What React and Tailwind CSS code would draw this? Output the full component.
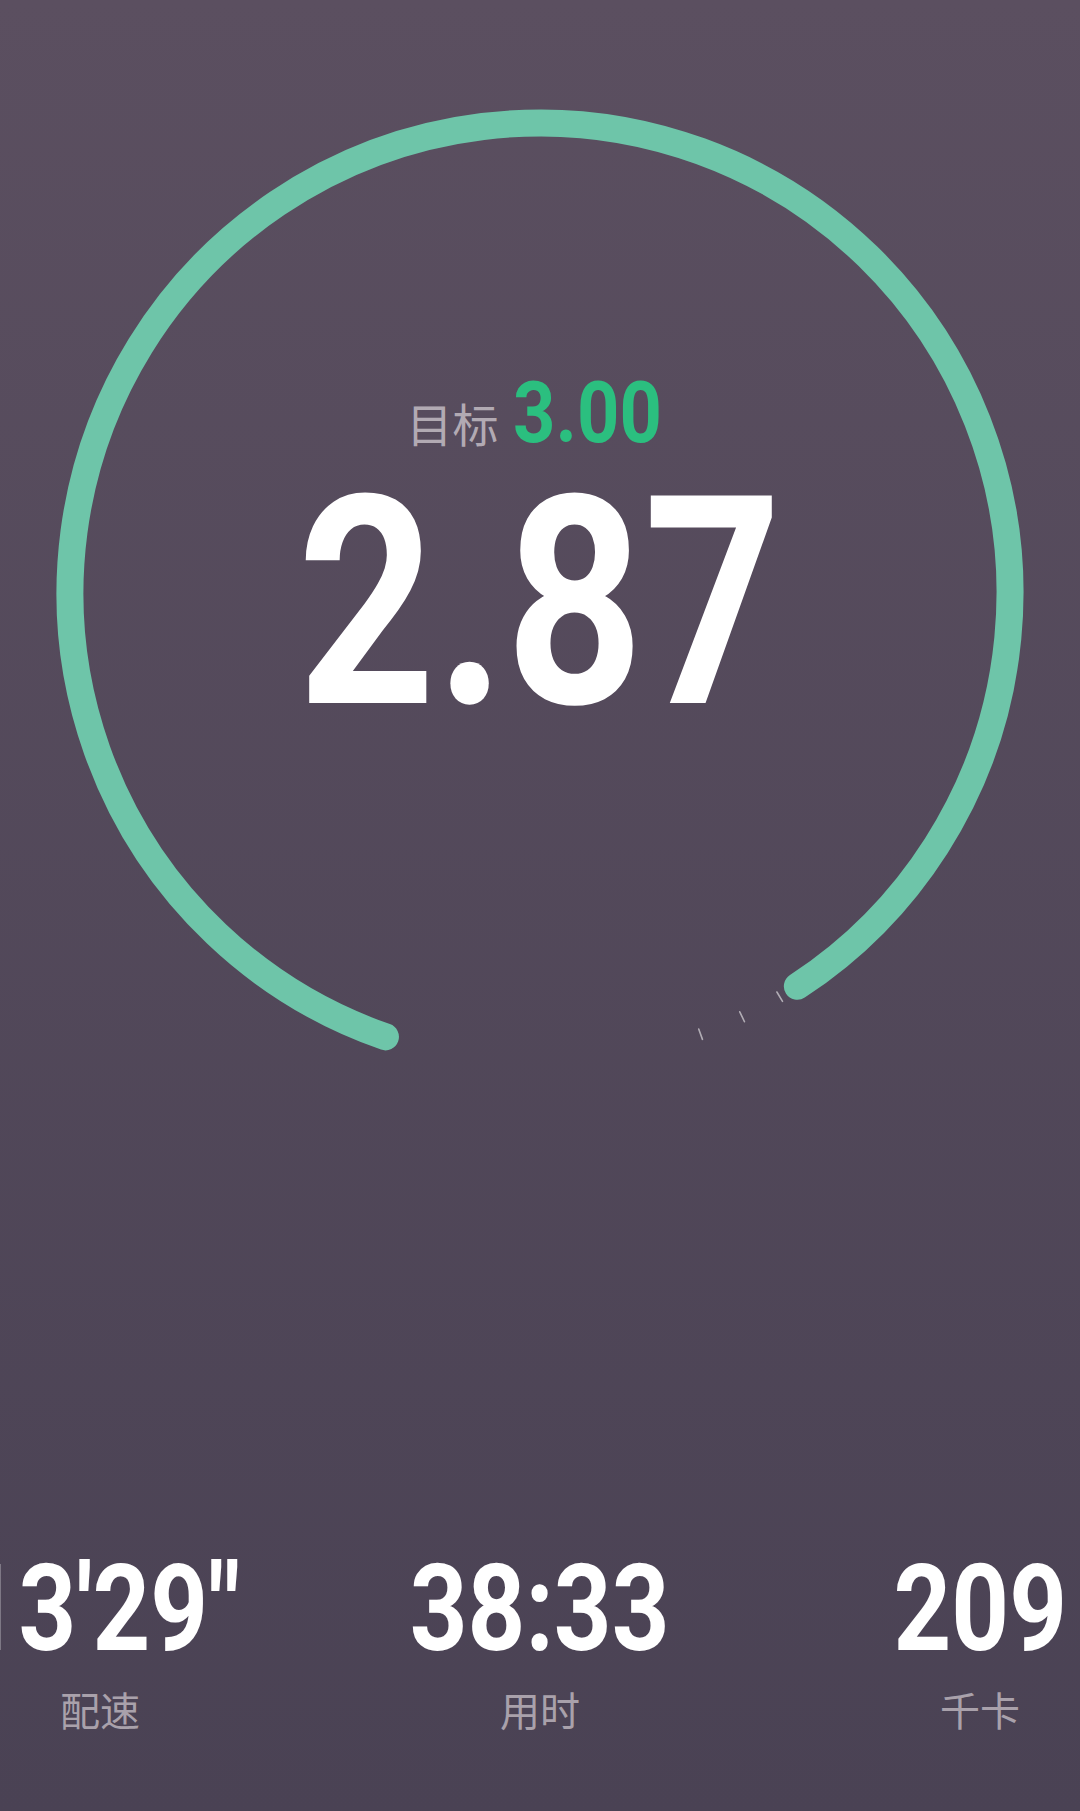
import React from "react";

const CX = 540;
const CY = 593;
const R = 470;

function pt(angleDeg, r) {
  const a = (angleDeg * Math.PI) / 180;
  return [CX + r * Math.cos(a), CY + r * Math.sin(a)];
}

function Ring() {
  const [x1, y1] = pt(109.2, R);
  const [x2, y2] = pt(56.8, R);
  const ticks = [70, 64.5, 59.3];
  return (
    <svg
      className="absolute left-0 top-0"
      width="1080"
      height="1080"
      viewBox="0 0 1080 1080"
    >
      <path
        d={`M ${x1} ${y1} A ${R} ${R} 0 1 1 ${x2} ${y2}`}
        fill="none"
        stroke="#6ec5a9"
        strokeWidth="27"
        strokeLinecap="round"
      />
      {ticks.map((t) => {
        const [a, b] = pt(t, R - 6);
        const [c, d] = pt(t, R + 5);
        return (
          <line
            key={t}
            x1={a}
            y1={b}
            x2={c}
            y2={d}
            stroke="#ffffff"
            strokeOpacity="0.55"
            strokeWidth="1.6"
            strokeLinecap="round"
          />
        );
      })}
    </svg>
  );
}

function Stat({ value, label }) {
  return (
    <div className="flex w-[440px] shrink-0 flex-col items-center">
      <div className="text-[120px] leading-none font-bold text-white [font-family:Roboto,'Liberation_Sans',sans-serif]">
        <span className="inline-block scale-x-[0.84]">{value}</span>
      </div>
      <div className="mt-[20px] text-[40px] leading-none text-[#a9a1ab] [font-family:'Noto_Sans_CJK_SC',sans-serif]">
        {label}
      </div>
    </div>
  );
}

export default function App() {
  return (
    <div className="relative h-[1811px] w-[1080px] overflow-hidden bg-gradient-to-b from-[#5b4f60] to-[#4a4254]">
      <div className="relative h-[1080px] w-full">
        <Ring />
        <div className="relative flex flex-col items-center pt-[370px]">
          <div className="flex items-baseline gap-[2px]">
            <span className="text-[46px] leading-none text-[#b2aab3] [font-family:'Noto_Sans_CJK_SC',sans-serif]">
              目标
            </span>
            <span className="inline-block scale-x-[0.86] text-[86px] leading-none font-bold text-[#2bbf7f] [font-family:Roboto,'Liberation_Sans',sans-serif]">
              3.00
            </span>
          </div>
          <div className="mt-[1px] text-[292px] leading-none font-bold text-white [font-family:Roboto,'Liberation_Sans',sans-serif]">
            <span className="inline-block scale-x-[0.825]">2.87</span>
          </div>
        </div>
      </div>
      <div className="flex w-full justify-center pt-[469px]">
        <Stat value={`13'29"`} label="配速" />
        <Stat value="38:33" label="用时" />
        <Stat value="209" label="千卡" />
      </div>
    </div>
  );
}
